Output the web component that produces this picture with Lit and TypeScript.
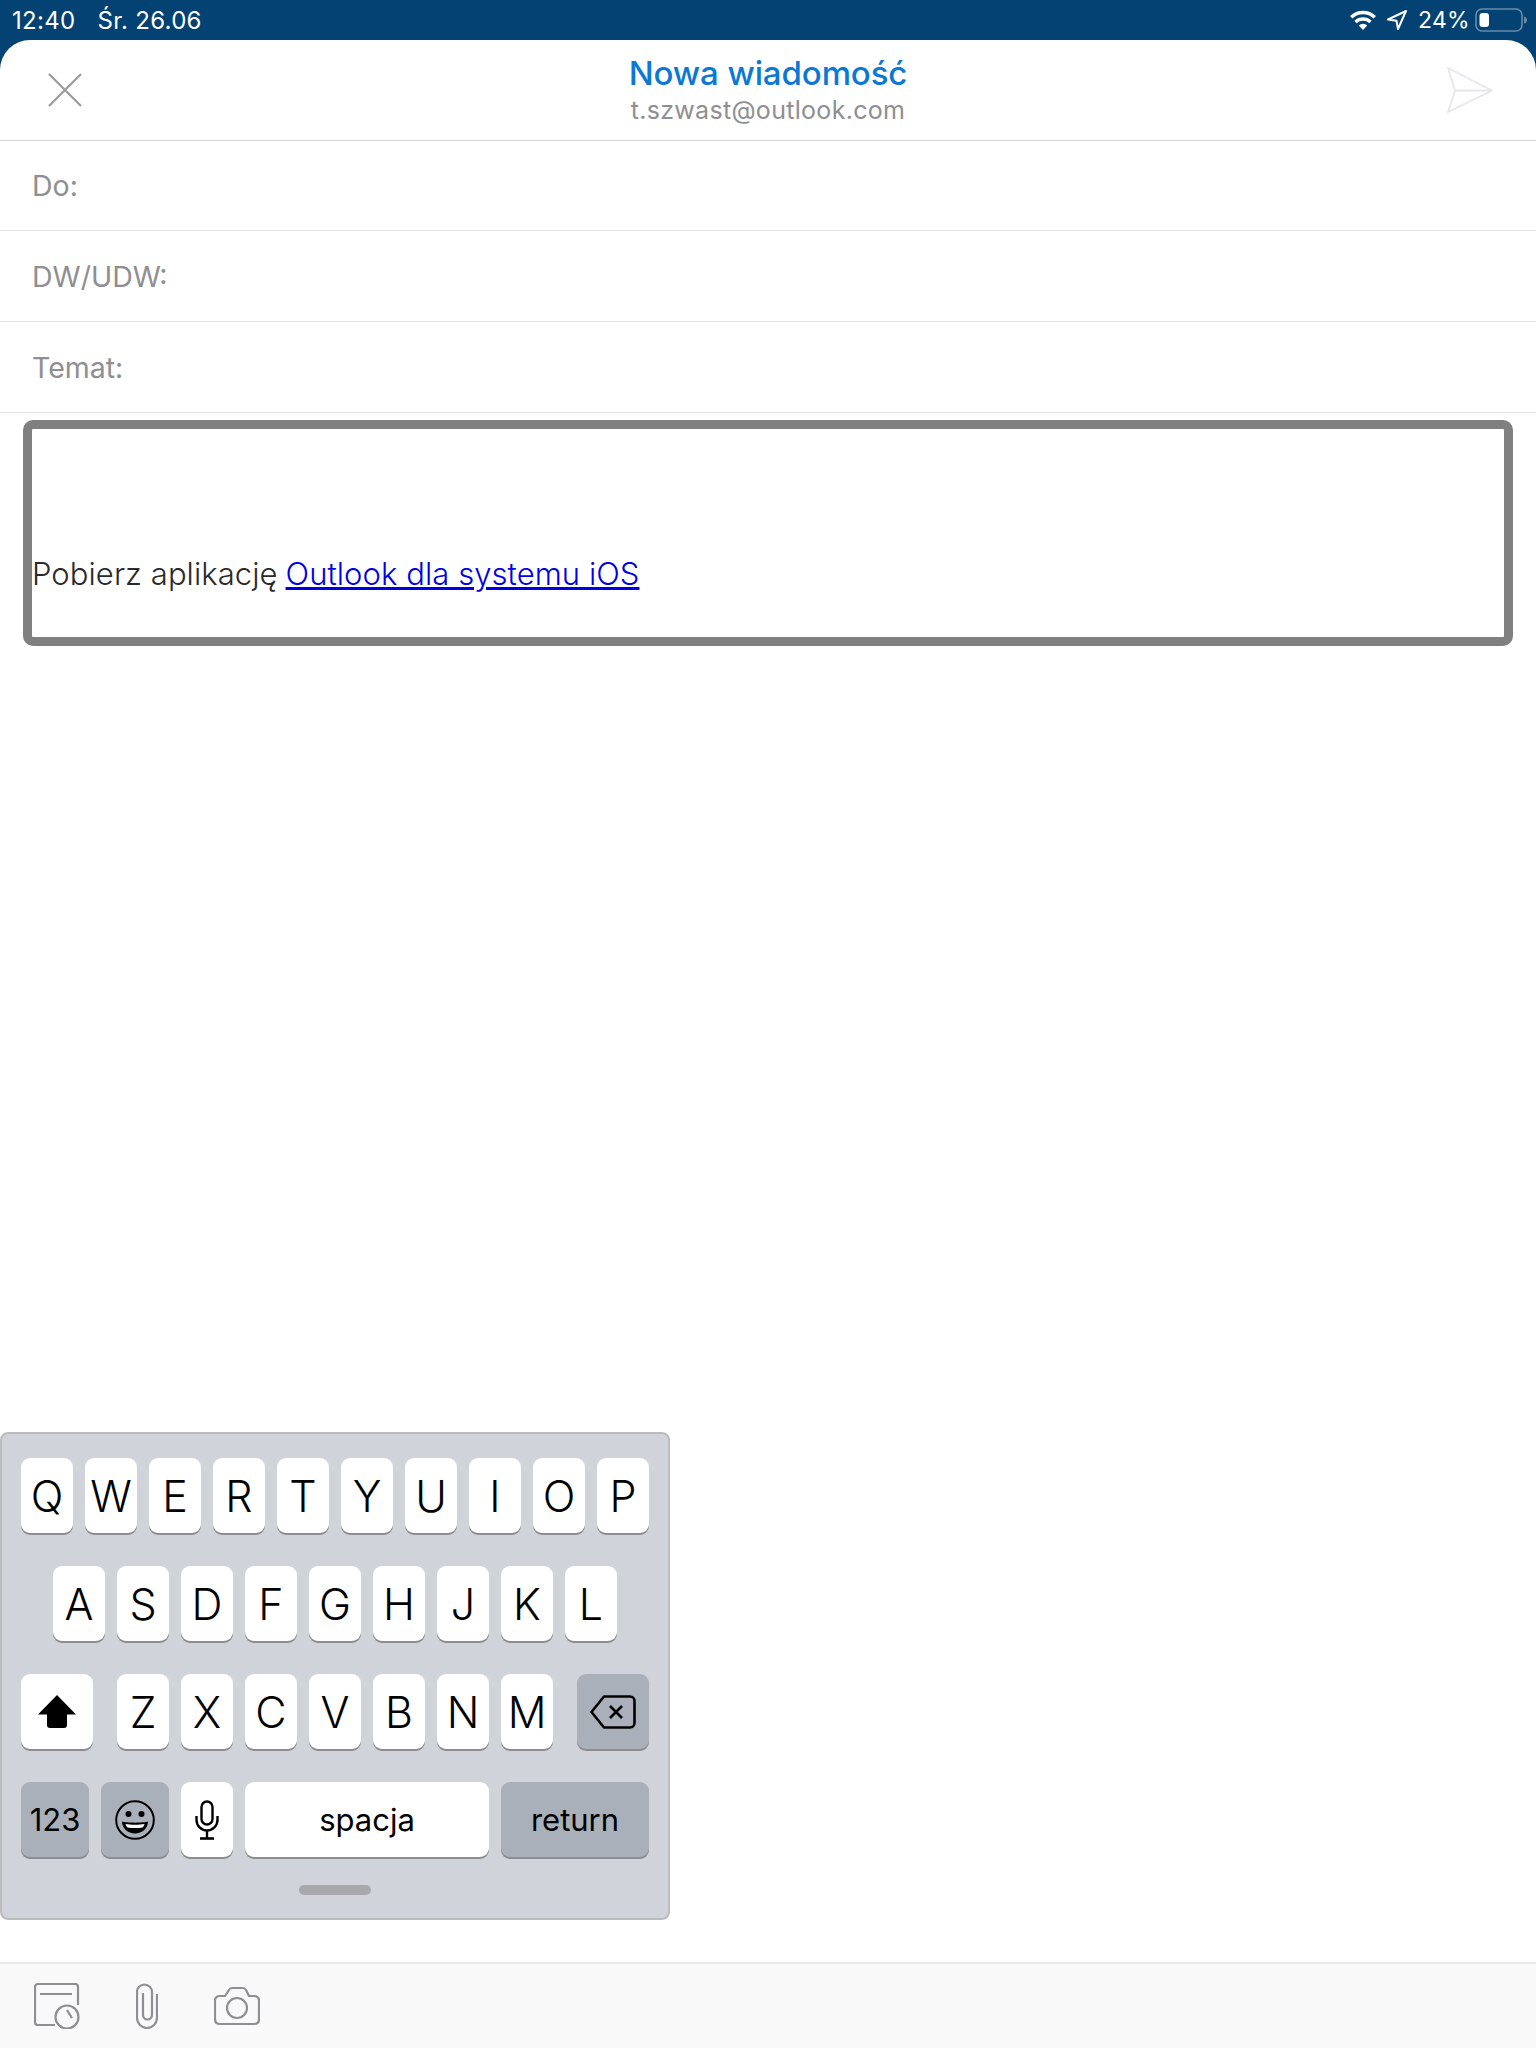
import { LitElement, html, css } from "lit";
import { customElement } from "lit/decorators.js";

@customElement("app-root")
export class AppRoot extends LitElement {
  static styles = css`
    :host { display: block; width: 1536px; height: 2048px; background: #fff; overflow: hidden; font-family: Inter, "Liberation Sans", sans-serif; }
    .page { display: flex; flex-direction: column; height: 2048px; }
    .top { background: #034273; }
    .status { height: 40px; display: flex; align-items: center; color: #fff; font-size: 24px; padding: 0 9px 0 12px; letter-spacing: 0.3px; box-sizing: border-box; }
    .status .date { margin-left: 22px; }
    .status .right { margin-left: auto; display: flex; align-items: center; font-size: 23px; }
    .status .pct { margin: 0 5px 0 11px; }
    .head { height: 101px; box-sizing: border-box; background: #fff; border-radius: 30px 30px 0 0; border-bottom: 1.5px solid #d4d4d8; display: grid; grid-template-columns: 1fr auto 1fr; align-items: center; padding: 0 43px 1px 43px; }
    .head .send { justify-self: end; }
    .head .close { margin-left: 5px; }
    .titles { text-align: center; display: flex; flex-direction: column; align-items: center; }
    .title { color: #0a78d4; font-size: 33px; font-weight: 500; line-height: 40px; letter-spacing: -0.1px; }
    .mail { color: #8e8e93; font-size: 25px; line-height: 32px; font-weight: 400; letter-spacing: 0.3px; margin-top: 1px; }
    .row { height: 91px; box-sizing: border-box; border-bottom: 1px solid #e2e2e2; display: flex; align-items: center; padding-left: 32px; color: #8e8e93; font-size: 28.5px; }
    .row.first { height: 90px; }
    .body { margin: 7px 23px 0 23px; height: 226px; box-sizing: border-box; border: 9px solid #808080; border-radius: 10px; display: flex; align-items: flex-end; padding: 0 0 43px 0; font-size: 31px; font-weight: 300; color: #2a2a2a; line-height: 40px; letter-spacing: 0.07px; }
    .body a { color: #0000e6; text-decoration: underline; margin-left: 8px; }
    .spacer { flex: 1; }
    .kbd { width: 670px; height: 488px; box-sizing: border-box; margin-right: auto; background: #d0d3d9; border: 2px solid #bbbcc0; border-radius: 8px; padding: 24px 0 0 19px; display: flex; flex-direction: column; gap: 33px; position: relative; }
    .krow { display: flex; gap: 12px; height: 75px; }
    .krow.second { padding-left: 32px; }
    .key { width: 52px; height: 75px; background: #fff; border-radius: 9px; box-shadow: 0 2px 0 #8c8c91; display: flex; align-items: center; justify-content: center; font-size: 43px; font-weight: 300; color: #000; }
    .dark { background: #aab0ba; }
    .wide { width: 72px; }
    .gap-r { margin-right: 12px; }
    .gap-l { margin-left: 12px; }
    .fn { width: 68px; }
    .space { width: 244px; }
    .ret { width: 148px; }
    .small { font-size: 31px; font-weight: 400; }
    .handle { position: absolute; left: 297px; top: 451px; width: 72px; height: 10px; border-radius: 5px; background: #a9a9ad; }
    .foot { margin-top: 42px; height: 86px; box-sizing: border-box; background: #f9f9f9; border-top: 2px solid #e6e6e6; display: flex; align-items: center; gap: 56px; padding: 0 0 0 34px; }
    svg { display: block; flex: none; }
    .ic { fill: none; stroke: #8e8e93; stroke-width: 2.2; }
    .close { stroke: #9b9b9b; }
  `;

  key(k: string) { return html`<div class="key">${k}</div>`; }

  render() {
    return html`<div class="page">
      <div class="top">
        <div class="status">
          <span>12:40</span><span class="date">Śr. 26.06</span>
          <div class="right">
            <svg width="28" height="20" viewBox="0 0 28 20"><path d="M14 20l-4.2-4.6a6 6 0 0 1 8.4 0z" fill="#fff"/><path d="M6.5 12a11 11 0 0 1 15 0M2.2 7.3a17 17 0 0 1 23.6 0" fill="none" stroke="#fff" stroke-width="3.4"/></svg>
            <svg style="margin-left:10px" width="20" height="20" viewBox="0 0 20 20"><path d="M19 1L1 9.5l8.5 1.3L11 19z" fill="none" stroke="#fff" stroke-width="2" stroke-linejoin="round"/></svg>
            <span class="pct">24%</span>
            <svg width="52" height="24" viewBox="0 0 52 24"><rect x="1" y="1" width="46" height="22" rx="6" fill="none" stroke="#6a8cab" stroke-width="1.6"/><rect x="4.5" y="5" width="9.5" height="14" rx="3" fill="#fff"/><path d="M49 8.5c2 .5 3 2 3 3.5s-1 3-3 3.5z" fill="#6a8cab"/></svg>
          </div>
        </div>
        <div class="head">
          <svg class="ic close" width="34" height="34" viewBox="0 0 34 34"><path d="M1 1l32 32M33 1L1 33"/></svg>
          <div class="titles"><div class="title">Nowa wiadomość</div><div class="mail">t.szwast@outlook.com</div></div>
          <svg class="send" width="46" height="46" viewBox="0 0 46 46" fill="none" stroke="#e6e6ec" stroke-width="1.8"><path d="M1 1l44 22.5L1 45l7-21.5zM8 23.5h37"/></svg>
        </div>
      </div>
      <div class="row first">Do:</div>
      <div class="row">DW/UDW:</div>
      <div class="row">Temat:</div>
      <div class="body"><span>Pobierz aplikację</span><a>Outlook dla systemu iOS</a></div>
      <div class="spacer"></div>
      <div class="kbd">
        <div class="krow">${"QWERTYUIOP".split("").map((k) => this.key(k))}</div>
        <div class="krow second">${"ASDFGHJKL".split("").map((k) => this.key(k))}</div>
        <div class="krow">
          <div class="key wide gap-r"><svg width="38" height="33" viewBox="0 0 38 33"><path d="M19 0L38 19.5H29V30a3 3 0 0 1-3 3H12a3 3 0 0 1-3-3V19.5H0z" fill="#000"/></svg></div>
          ${"ZXCVBNM".split("").map((k) => this.key(k))}
          <div class="key wide dark gap-l"><svg width="46" height="34" viewBox="0 0 46 34" fill="none" stroke="#000" stroke-width="2.6"><path d="M14 1.5H40a4.5 4.5 0 0 1 4.5 4.5V28a4.5 4.5 0 0 1-4.5 4.5H14L1.5 17z" stroke-linejoin="round"/><path d="M20 11l12 12M32 11L20 23"/></svg></div>
        </div>
        <div class="krow">
          <div class="key fn dark small">123</div>
          <div class="key fn dark"><svg width="40" height="40" viewBox="0 0 40 40"><circle cx="20" cy="20" r="18.8" fill="none" stroke="#000" stroke-width="2"/><circle cx="13.5" cy="14" r="3" fill="#000"/><circle cx="26.5" cy="14" r="3" fill="#000"/><path d="M7 21.5c4 1.5 22 1.5 26 0 0 7-6 12-13 12S7 28.5 7 21.5z" fill="#000"/><path d="M10.5 24c5 1 14 1 19 0-.5 1.5-1 2.5-2 3.5-4 .8-11 .8-15 0-1-1-1.5-2-2-3.5z" fill="#fff"/></svg></div>
          <div class="key"><svg width="24" height="40" viewBox="0 0 24 40" fill="none" stroke="#000" stroke-width="2.4"><rect x="6.5" y="1.5" width="11" height="23" rx="5.5"/><path d="M1.5 16v4a10.5 10.5 0 0 0 21 0v-4M12 31v7"/><path d="M5 38.5h14" stroke-width="2.6"/></svg></div>
          <div class="key space small">spacja</div>
          <div class="key ret dark small">return</div>
        </div>
        <div class="handle"></div>
      </div>
      <div class="foot">
        <svg class="ic" width="46" height="46" viewBox="0 0 46 46"><path d="M21 42H4a3 3 0 0 1-3-3V4a3 3 0 0 1 3-3h37a3 3 0 0 1 3 3v18M6 11h32"/><circle cx="33" cy="34" r="11.5"/><path d="M33 27l5 8"/></svg>
        <svg class="ic" width="22" height="46" viewBox="0 0 22 46"><path d="M21 11v24a10 10 0 0 1-20 0V9a7.5 7.5 0 0 1 15 0v23a4.5 4.5 0 0 1-9 0V10"/></svg>
        <svg class="ic" width="46" height="40" viewBox="0 0 46 40"><path d="M6 10h5l4-6q1-2 3-2h11q2 0 3 2l3 6h5q5 0 5 5v18q0 5-5 5H6q-5 0-5-5V15q0-5 5-5z"/><circle cx="23" cy="22" r="10"/></svg>
      </div>
    </div>`;
  }
}
